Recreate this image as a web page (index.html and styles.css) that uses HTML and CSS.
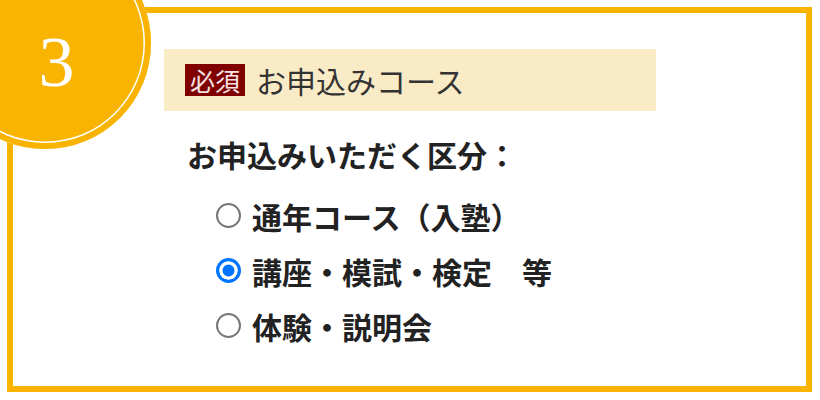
FILE: index.html
```html
<!DOCTYPE html>
<html lang="ja">
<head>
    <meta charset="UTF-8">
    <meta name="viewport" content="width=device-width, initial-scale=1.0">
    <title>お申込みコース</title>
    <link rel="stylesheet" href="styles.css">
</head>
<body>

<div class="step">
    <div class="step-num"><span>3</span></div>

    <div class="step-box">
        <div class="field-title">
            <span class="required">必須</span>
            <span class="field-name">お申込みコース</span>
        </div>

        <p class="question">お申込みいただく区分：</p>

        <ul class="choices">
            <li>
                <label><input type="radio" name="course" value="year"> 通年コース（入塾）</label>
            </li>
            <li>
                <label><input type="radio" name="course" value="lecture" checked> 講座・模試・検定　等</label>
            </li>
            <li>
                <label><input type="radio" name="course" value="trial"> 体験・説明会</label>
            </li>
        </ul>
    </div>
</div>

</body>
</html>
```

FILE: styles.css
```css
body {
    font-family: "Noto Sans CJK JP", "Noto Sans", sans-serif;
    color: #222;
    background: #fff;
    margin: 0;
}

.step {
    position: relative;
    padding: 7px;
}

.step-box {
    box-sizing: border-box;
    width: 805px;
    height: 385px;
    border: 6px solid #f8b400;
    background: #fff;
}

/* big step number circle, sits over the top-left corner */
.step-num {
    position: absolute;
    left: -61px;
    top: -63px;
    z-index: 2;
    box-sizing: border-box;
    width: 212px;
    height: 212px;
    border-radius: 50%;
    background: #f8b400;
    box-shadow: inset 0 0 0 6px #f8b400, inset 0 0 0 7.5px #fff;
    display: flex;
    align-items: center;
    justify-content: center;
    padding: 37px 0 0 23px;
}

.step-num span {
    font-family: "Liberation Serif", serif;
    font-size: 72px;
    line-height: 1;
    color: #fff;
}

.field-title {
    display: flex;
    align-items: center;
    width: 492px;
    height: 62px;
    margin: 36px 0 0 151px;
    padding-left: 21px;
    box-sizing: border-box;
    background: #faebc7;
}

.required {
    display: inline-block;
    height: 32px;
    line-height: 32px;
    padding: 0 5px;
    background: #800000;
    color: #f4e4e4;
    font-size: 25px;
}

.field-name {
    margin-left: 11px;
    font-size: 30px;
    color: #333;
}

.question {
    margin: 22px 0 0 174px;
    font-size: 30px;
    font-weight: bold;
    line-height: 43px;
}

.choices {
    list-style: none;
    margin: 12px 0 0 203px;
    padding: 0;
}

.choices li {
    height: 55px;
    display: flex;
    align-items: center;
}

.choices label {
    display: flex;
    align-items: center;
    font-size: 30px;
    font-weight: bold;
}

.choices input[type="radio"] {
    appearance: none;
    box-sizing: border-box;
    width: 25px;
    height: 25px;
    margin: 0 11px 0 0;
    border: 2.5px solid #767676;
    border-radius: 50%;
    background: #fff;
}

.choices input[type="radio"]:checked {
    border: 3px solid #0075ff;
    background: #0075ff;
    box-shadow: inset 0 0 0 3.5px #fff;
}
```
